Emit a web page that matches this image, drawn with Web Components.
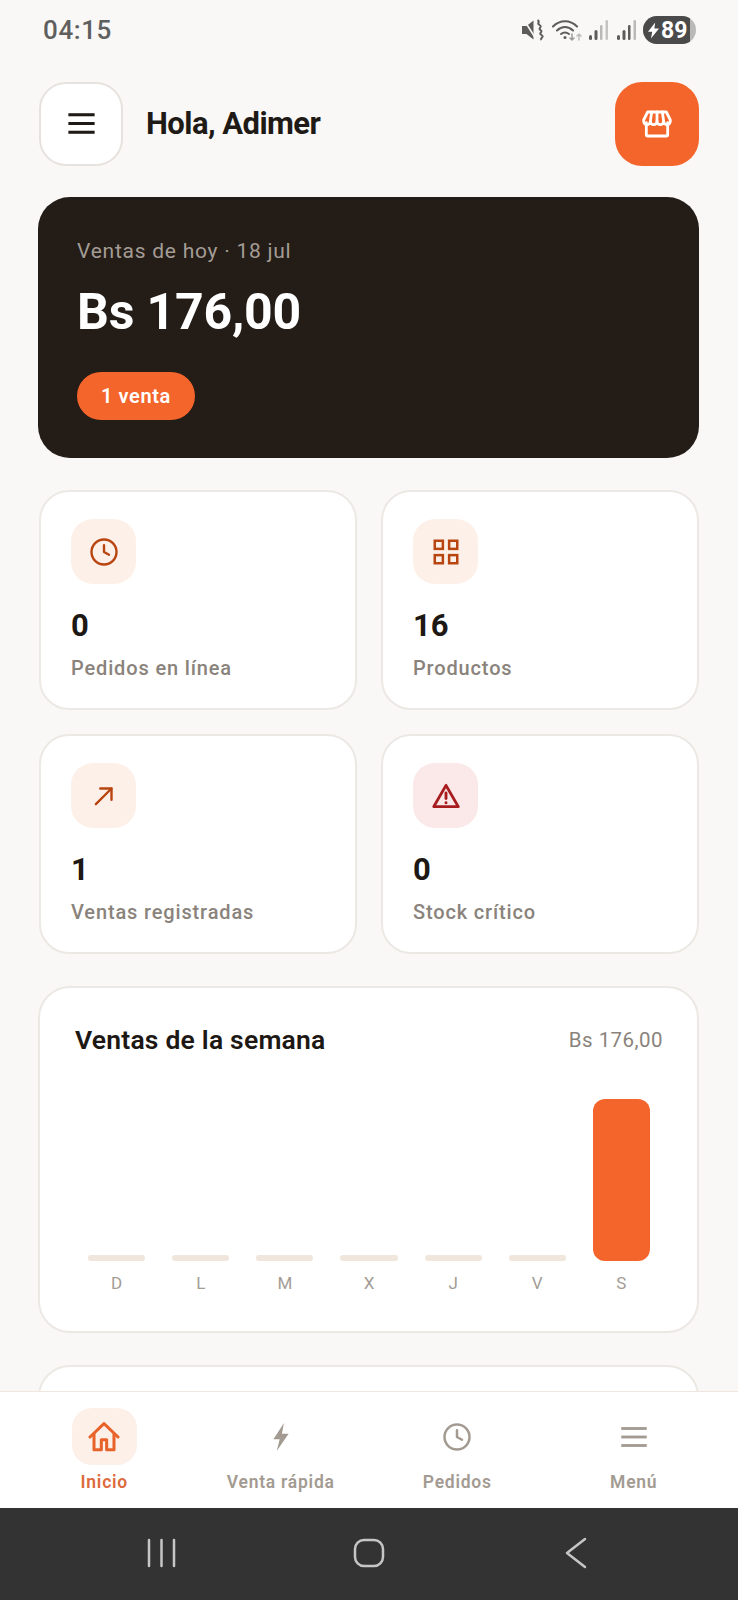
<!DOCTYPE html>
<html lang="es">
<head>
<meta charset="utf-8">
<title>Inicio</title>
<style>
  html, body { margin: 0; padding: 0; background: #faf8f6; }
  body { font-family: Roboto, "Liberation Sans", sans-serif; }
</style>
</head>
<body>
<app-shell>
  <status-bar></status-bar>
  <app-header name="Hola, Adimer"></app-header>
  <hero-card label="Ventas de hoy · 18 jul" amount="Bs 176,00" pill="1 venta"></hero-card>
  <stat-grid>
    <stat-card icon="clock" value="0" label="Pedidos en línea"></stat-card>
    <stat-card icon="grid" value="16" label="Productos"></stat-card>
    <stat-card icon="arrow" value="1" label="Ventas registradas"></stat-card>
    <stat-card icon="alert" tone="red" value="0" label="Stock crítico"></stat-card>
  </stat-grid>
  <week-chart title="Ventas de la semana" total="Bs 176,00"></week-chart>
  <blank-card></blank-card>
  <bottom-nav slot="nav">
    <nav-item icon="home" label="Inicio" active></nav-item>
    <nav-item icon="bolt" label="Venta rápida"></nav-item>
    <nav-item icon="clock" label="Pedidos"></nav-item>
    <nav-item icon="menu" label="Menú"></nav-item>
  </bottom-nav>
  <system-nav slot="nav"></system-nav>
</app-shell>

<script>
const icons = {
  clock: '<circle cx="12" cy="12" r="10"/><path d="M12 6.5V12l4 2.2"/>',
  grid: '<g stroke-width="2" stroke-linejoin="miter"><rect x="3" y="3" width="6.5" height="6.5"/><rect x="14.5" y="3" width="6.5" height="6.5"/><rect x="3" y="14.5" width="6.5" height="6.5"/><rect x="14.5" y="14.5" width="6.5" height="6.5"/></g>',
  arrow: '<path d="M5.500 18.500L18 6"/><path d="M9 6h9v9"/>',
  alert: '<g stroke-width="2.3"><path d="M12 3.500L2.200 20.500h19.600z"/><path d="M12 9.500v4.500"/><path d="M12 17.400v.1"/></g>',
  home: '<path d="M1.500 12L12 2l10.500 10"/><path d="M4.500 10v11.500h5.500V14h4v7.500h5.500V10"/>',
  menu: '<g stroke-linecap="butt"><path d="M3 6h18"/><path d="M3 12h18"/><path d="M3 18h18"/></g>',
  store: '<path d="M4 11v9a1 1 0 0 0 1 1h14a1 1 0 0 0 1-1v-9"/><path d="M5 3h14l3 6v1a2.500 2.500 0 0 1-5 0 2.500 2.500 0 0 1-5 0 2.500 2.500 0 0 1-5 0 2.500 2.500 0 0 1-5 0V9z"/><path d="M7 10l1-7M12 10V3M17 10l-1-7"/>'
};

function iconSvg(name, size, stroke) {
  if (name === 'bolt') {
    return `<svg width="${size}" height="${size}" viewBox="0 0 24 24"><path fill="currentColor" d="M14.200 1.500L6.300 13.600h4.700L8.800 22.500l8.900-13h-5z"/></svg>`;
  }
  return `<svg width="${size}" height="${size}" viewBox="0 0 24 24" fill="none" stroke="currentColor" stroke-width="${stroke}" stroke-linecap="round" stroke-linejoin="round">${icons[name]}</svg>`;
}

class AppShell extends HTMLElement {
  constructor() {
    super();
    this.attachShadow({ mode: 'open' }).innerHTML = `
      <style>
        :host { display: flex; flex-direction: column; width: 738px; height: 1600px; overflow: hidden; background: #faf8f6; }
        .scroll { flex: 1; min-height: 0; overflow: hidden; padding: 0 39px; display: flex; flex-direction: column; }
        .fixed { flex: none; display: block; }
      </style>
      <div class="scroll"><slot></slot></div>
      <div class="fixed"><slot name="nav"></slot></div>`;
  }
}

class StatusBar extends HTMLElement {
  constructor() {
    super();
    const bars = (a, b) => `<svg width="20" height="20" viewBox="0 0 20 20"><rect x="0" y="15" width="3" height="5" rx="1.500" fill="#5c5c5c"/><rect x="5.500" y="10" width="3" height="10" rx="1.500" fill="#5c5c5c"/><rect x="11" y="5" width="2.500" height="15" rx="1.200" fill="${a}"/><rect x="16.500" y="0" width="2.500" height="20" rx="1.200" fill="${b}"/></svg>`;
    this.attachShadow({ mode: 'open' }).innerHTML = `
      <style>
        :host { display: flex; align-items: center; justify-content: space-between; height: 60px; margin: 0 3px 21px 4px; flex: none; }
        .time { font: 500 26px/1 Roboto, sans-serif; color: #5f5f5f; letter-spacing: .6px; }
        .icons { display: flex; align-items: center; }
        svg { display: block; }
        .batt { position: relative; margin-left: 6px; width: 53px; height: 28px; border-radius: 14px; overflow: hidden; background: #b9b9b7; display: flex; align-items: center; }
        .fill { position: absolute; left: 0; top: 0; bottom: 0; width: 47px; background: #4a4a4a; }
        .batt svg { position: relative; margin-left: 5px; }
        .num { position: relative; font: 700 23px/1 Roboto, sans-serif; color: #fff; margin-left: 2px; }
      </style>
      <span class="time">04:15</span>
      <div class="icons">
        <svg width="22" height="22" viewBox="0 0 22 22" fill="none"><path fill="#5c5c5c" d="M0 7h4.500l7-5.500v19l-7-5.500H0z"/><path d="M2 1l12 19" stroke="#faf8f6" stroke-width="1.600"/><path d="M15.500 1c3.500 2-1.500 3 2 5s-2 3 1 5-2.500 3 1 5-2 3 0 5" stroke="#5c5c5c" stroke-width="2"/></svg>
        <svg style="margin-left:8px" width="30" height="22" viewBox="0 0 30 22" fill="none" stroke="#5c5c5c" stroke-width="2.100" stroke-linecap="round"><path d="M1 7.500C8 .5 18 .5 25 7.500"/><path d="M5 11.500C10 7 16 7 21 11.500"/><path d="M9 15c3-2.200 5-2.200 8 0"/><circle cx="13" cy="18.500" r="1.500" fill="#5c5c5c" stroke="none"/><path d="M20 15v6M18 19l2 2 2-2" stroke="#9a9a9a" stroke-width="1.500"/><path d="M27 21v-6M25 17l2-2 2 2" stroke="#bdbdbd" stroke-width="1.500"/></svg>
        <span style="margin-left:7px">${bars('#b9b9b9', '#c4c4c4')}</span>
        <span style="margin-left:8px">${bars('#5c5c5c', '#b9b9b9')}</span>
        <div class="batt"><div class="fill"></div>
          <svg width="11" height="17" viewBox="0 0 13 19"><path fill="#fff" d="M8.500 0L0 11h5l-1.500 8L13 7H7.500z"/></svg>
          <span class="num">89</span>
        </div>
      </div>`;
  }
}

class AppHeader extends HTMLElement {
  constructor() {
    super();
    this.attachShadow({ mode: 'open' }).innerHTML = `
      <style>
        :host { display: flex; align-items: center; flex: none; height: 85px; margin-bottom: 31px; }
        .btn { width: 84px; height: 84px; box-sizing: border-box; border-radius: 27px; display: flex; align-items: center; justify-content: center; flex: none; }
        .menu { background: #fff; border: 2px solid #e7e2dd; color: #201a16; }
        .store { background: #f4652b; color: #fff; margin-left: auto; }
        .name { margin-left: 23px; font: 700 31px/1 Roboto, sans-serif; letter-spacing: -.55px; color: #201a16; }
      </style>
      <div class="btn menu">${iconSvg('menu', 35, 2.1)}</div>
      <span class="name">${this.getAttribute('name')}</span>
      <div class="btn store">${iconSvg('store', 32, 2.100)}</div>`;
  }
}

class HeroCard extends HTMLElement {
  constructor() {
    super();
    this.attachShadow({ mode: 'open' }).innerHTML = `
      <style>
        :host { display: block; flex: none; height: 261px; box-sizing: border-box; background: #231c17; border-radius: 32px; padding: 41px 39px 0; margin: 0 0 32px -1px; color: #fff; }
        .label { font: 400 21px/26px Roboto, sans-serif; letter-spacing: .75px; color: #a49c95; }
        .amount { font: 700 50px/58px Roboto, sans-serif; margin-top: 19px; letter-spacing: -.2px; }
        .pill { display: inline-block; margin-top: 31px; height: 48px; padding: 0 24px; border-radius: 24px; background: #f4652b; font: 600 20px/48px Roboto, sans-serif; letter-spacing: .6px; }
      </style>
      <div class="label">${this.getAttribute('label')}</div>
      <div class="amount">${this.getAttribute('amount')}</div>
      <span class="pill">${this.getAttribute('pill')}</span>`;
  }
}

class StatGrid extends HTMLElement {
  constructor() {
    super();
    this.attachShadow({ mode: 'open' }).innerHTML = `
      <style>
        :host { display: grid; flex: none; grid-template-columns: 1fr 1fr; gap: 24px; margin-bottom: 32px; }
      </style>
      <slot></slot>`;
  }
}

class StatCard extends HTMLElement {
  constructor() {
    super();
    const red = this.getAttribute('tone') === 'red';
    this.attachShadow({ mode: 'open' }).innerHTML = `
      <style>
        :host { display: block; height: 220px; box-sizing: border-box; background: #fff; border: 2px solid #ece8e4; border-radius: 30px; padding: 27px 30px 0; }
        .ico { width: 65px; height: 65px; border-radius: 22px; display: flex; align-items: center; justify-content: center; background: ${red ? '#fbe8e8' : '#fdf0e9'}; color: ${red ? '#a71c1f' : '#b8440f'}; }
        .val { margin-top: 23px; font: 700 31px/38px Roboto, sans-serif; color: #1d1814; }
        .lab { margin-top: 10px; font: 500 20px/26px Roboto, sans-serif; letter-spacing: .85px; color: #8a837c; }
      </style>
      <div class="ico">${iconSvg(this.getAttribute('icon'), 30, 1.9)}</div>
      <div class="val">${this.getAttribute('value')}</div>
      <div class="lab">${this.getAttribute('label')}</div>`;
  }
}

class WeekChart extends HTMLElement {
  constructor() {
    super();
    const days = [['D', 6], ['L', 6], ['M', 6], ['X', 6], ['J', 6], ['V', 6], ['S', 162]];
    const cols = days.map(d => `
      <div class="col">
        <div class="bar ${d[1] > 6 ? 'on' : ''}" style="height:${d[1]}px"></div>
        <span class="day">${d[0]}</span>
      </div>`).join('');
    this.attachShadow({ mode: 'open' }).innerHTML = `
      <style>
        :host { display: block; flex: none; height: 347px; box-sizing: border-box; background: #fff; border: 2px solid #ece8e4; border-radius: 32px; padding: 34px 34px 0 35px; margin: 0 0 32px -1px; }
        .top { display: flex; justify-content: space-between; align-items: center; height: 36px; }
        .title { font: 600 26.500px/36px Roboto, sans-serif; color: #1d1814; letter-spacing: .2px; }
        .total { font: 400 20.500px/36px Roboto, sans-serif; color: #8a837c; letter-spacing: .45px; }
        .chart { display: grid; grid-template-columns: repeat(7, 1fr); gap: 27px; padding: 0 13px; margin-top: 41px; height: 162px; align-items: end; }
        .col { height: 162px; display: flex; flex-direction: column; justify-content: flex-end; position: relative; }
        .bar { background: #f0e6dc; border-radius: 3px; }
        .bar.on { background: #f4652b; border-radius: 12px; }
        .day { position: absolute; left: 0; right: 0; top: 174px; text-align: center; font: 400 17px/20px Roboto, sans-serif; color: #a39c95; }
      </style>
      <div class="top">
        <span class="title">${this.getAttribute('title')}</span>
        <span class="total">${this.getAttribute('total')}</span>
      </div>
      <div class="chart">${cols}</div>`;
  }
}

class BlankCard extends HTMLElement {
  constructor() {
    super();
    this.attachShadow({ mode: 'open' }).innerHTML = `
      <style>
        :host { display: block; flex: none; height: 120px; box-sizing: border-box; background: #fff; border: 2px solid #ece8e4; border-radius: 32px; margin-left: -1px; }
      </style>`;
  }
}

class BottomNav extends HTMLElement {
  constructor() {
    super();
    this.attachShadow({ mode: 'open' }).innerHTML = `
      <style>
        :host { display: grid; grid-template-columns: repeat(4, 1fr); height: 117px; box-sizing: border-box; padding: 16px 16px 0; background: #fff; border-top: 1px solid #efe6df; }
      </style>
      <slot></slot>`;
  }
}

class NavItem extends HTMLElement {
  constructor() {
    super();
    const on = this.hasAttribute('active');
    const name = this.getAttribute('icon');
    const size = { clock: 30, menu: 34, home: 32, bolt: 32 }[name];
    this.attachShadow({ mode: 'open' }).innerHTML = `
      <style>
        :host { display: flex; flex-direction: column; align-items: center; }
        .ico { width: 65px; height: 57px; border-radius: 20px; display: flex; align-items: center; justify-content: center; background: ${on ? '#fdf0e9' : 'transparent'}; color: ${on ? '#e8632b' : '#a39b92'}; }
        .lab { margin-top: 5px; font: 600 17.500px/24px Roboto, sans-serif; letter-spacing: .75px; color: ${on ? '#dd6a3c' : '#a39b92'}; }
      </style>
      <div class="ico">${iconSvg(name, size, name === 'home' ? 2.3 : 2)}</div>
      <span class="lab">${this.getAttribute('label')}</span>`;
  }
}

class SystemNav extends HTMLElement {
  constructor() {
    super();
    this.attachShadow({ mode: 'open' }).innerHTML = `
      <style>
        :host { display: grid; grid-template-columns: repeat(3, 207px); justify-content: center; align-items: center; justify-items: center; height: 92px; box-sizing: border-box; padding-bottom: 2px; background: #333; }
        svg { display: block; }
      </style>
      <svg width="30" height="30" viewBox="0 0 30 30" fill="none" stroke="#c6c6c6" stroke-width="2.500" stroke-linecap="round"><path d="M2 2v26M14.500 2v26M27 2v26"/></svg>
      <svg width="32" height="30" viewBox="0 0 32 30" fill="none" stroke="#c6c6c6" stroke-width="2.500"><rect x="2" y="2" width="28" height="26" rx="9"/></svg>
      <svg width="22" height="32" viewBox="0 0 22 32" fill="none" stroke="#c6c6c6" stroke-width="2.500" stroke-linecap="round" stroke-linejoin="round"><path d="M20 2L2 16l18 14"/></svg>`;
  }
}

customElements.define('app-shell', AppShell);
customElements.define('status-bar', StatusBar);
customElements.define('app-header', AppHeader);
customElements.define('hero-card', HeroCard);
customElements.define('stat-grid', StatGrid);
customElements.define('stat-card', StatCard);
customElements.define('week-chart', WeekChart);
customElements.define('blank-card', BlankCard);
customElements.define('bottom-nav', BottomNav);
customElements.define('nav-item', NavItem);
customElements.define('system-nav', SystemNav);
</script>
</body>
</html>
